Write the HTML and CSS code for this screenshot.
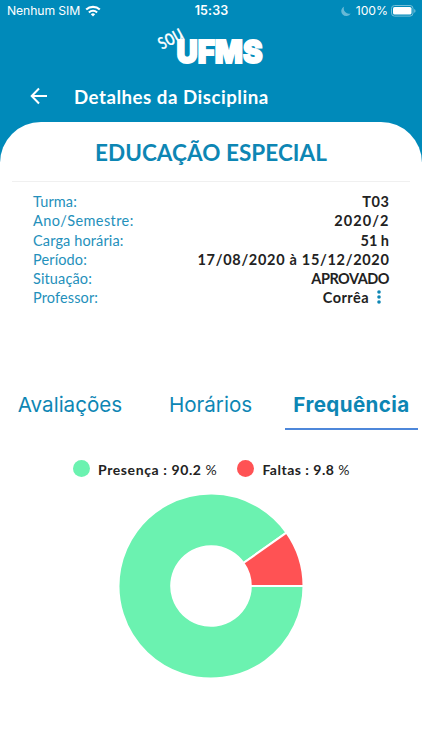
FILE: index.html
```html
<!DOCTYPE html>
<html lang="pt-BR">
<head>
<meta charset="utf-8">
<title>Detalhes da Disciplina</title>
<link rel="stylesheet" href="styles.css">
</head>
<body>
<header class="header">
  <div class="status">
    <div class="status-left"><span class="carrier">Nenhum SIM</span>
      <svg width="16" height="12" viewBox="0 0 16 12"><g fill="none" stroke="#fff" stroke-width="2.1"><path d="M1.2 4.6a9.8 9.8 0 0 1 13.6 0"/><path d="M3.9 7.4a5.9 5.9 0 0 1 8.2 0"/></g><path d="M5.8 9.2a3.2 3.2 0 0 1 4.4 0L8 11.5z" fill="#fff"/></svg>
    </div>
    <span class="time">15:33</span>
    <div class="status-right">
      <svg width="10" height="11" viewBox="0 0 10 11"><path d="M3.2.5A5 5 0 1 0 9.7 7.4 5.2 5.2 0 0 1 3.2.5z" fill="#66b9d6"/></svg>
      <span class="percent">100%</span>
      <svg width="25" height="12" viewBox="0 0 25 12"><rect x=".5" y=".5" width="21.5" height="10.6" rx="3" fill="none" stroke="#73bfd9"/><rect x="2" y="2" width="18.5" height="7.6" rx="1.6" fill="#fff"/><path d="M23.2 4v3.8q1.3-.5 1.3-1.9T23.2 4z" fill="#73bfd9"/></svg>
    </div>
  </div>
  <svg class="logo" width="124" height="46" viewBox="0 0 124 46">
    <text class="logo-sou" transform="translate(11.5 27.5) rotate(-26) skewX(8) scale(1 1.4)" textLength="26" lengthAdjust="spacingAndGlyphs">sou</text>
    <text class="logo-name" x="25.5" y="41.3" textLength="86" lengthAdjust="spacingAndGlyphs">UFMS</text>
  </svg>
  <div class="nav">
    <svg width="18" height="18" viewBox="0 0 18 18"><path d="M9 1.5 1.7 9 9 16.5M1.9 9H17" fill="none" stroke="#fff" stroke-width="2"/></svg>
    <h1 class="nav-title">Detalhes da Disciplina</h1>
  </div>
</header>
<main class="card">
  <h2 class="course">EDUCAÇÃO ESPECIAL</h2>
  <dl class="details">
    <div class="row"><dt>Turma:</dt><dd class="class-id">T03</dd></div>
    <div class="row"><dt class="term-label">Ano/Semestre:</dt><dd class="term">2020/2</dd></div>
    <div class="row"><dt>Carga horária:</dt><dd>51 h</dd></div>
    <div class="row"><dt>Período:</dt><dd class="period">17/08/2020 à 15/12/2020</dd></div>
    <div class="row"><dt>Situação:</dt><dd class="result">APROVADO</dd></div>
    <div class="row"><dt>Professor:</dt><dd class="teacher">Corrêa<svg class="more" width="6" height="14" viewBox="0 0 6 14"><g fill="#0d86b4"><circle cx="3" cy="2" r="1.8"/><circle cx="3" cy="7" r="1.8"/><circle cx="3" cy="12" r="1.8"/></g></svg></dd></div>
  </dl>
  <nav class="tabs">
    <a class="tab">Avaliações</a>
    <a class="tab">Horários</a>
    <a class="tab active">Frequência</a>
  </nav>
  <div class="legend">
    <span class="dot green"></span><span class="leg presence">Presença : 90.2 <span class="unit">%</span></span>
    <span class="dot red"></span><span class="leg absence">Faltas : 9.8 <span class="unit">%</span></span>
  </div>
  <svg class="chart" width="188" height="188" viewBox="-94 -94 188 188">
    <g stroke="#fff" stroke-width="2">
      <path fill="#6bf2b0" d="M92.5 0A92.5 92.5 0 1 1 75.5-53.4L32.5-23A39.8 39.8 0 1 0 39.8 0z"/>
      <path fill="#ff5254" d="M75.5-53.4A92.5 92.5 0 0 1 92.5 0H39.8A39.8 39.8 0 0 0 32.5-23z"/>
    </g>
  </svg>
</main>
</body>
</html>
```

FILE: styles.css
```css
* { box-sizing: border-box; }
body { margin: 0; width: 422px; height: 750px; overflow: hidden; background: #fff; font-family: Lato, sans-serif; }
svg { display: block; flex: none; }
.header { background: #008aba; height: 162px; color: #fff; }
.status { display: grid; grid-template-columns: 1fr auto 1fr; align-items: center; height: 22px; padding: 0 6px 0 7px; font: 12px/22px Inter, sans-serif; }
.status-left, .status-right { display: flex; align-items: center; }
.status-left { gap: 5px; }
.status-right { justify-content: flex-end; }
.carrier { font-size: 12.2px; letter-spacing: -.1px; }
.time { font-weight: 600; font-size: 12.5px; letter-spacing: .1px; }
.percent { margin: 0 3px 0 5px; font-size: 12.2px; }
.logo { margin: 0 0 0 151px; overflow: visible; }
.logo-name { font: 900 31.5px Inter, sans-serif; fill: #fff; stroke: #fff; stroke-width: 1.8px; }
.logo-sou { font: italic 400 17px Lato, sans-serif; fill: #fff; stroke: #fff; stroke-width: .2px; }
.nav { display: flex; align-items: center; height: 32px; margin: 12px 0 0 30px; }
.nav-title { margin: 1px 0 0 26px; font: 700 18.7px/28px Lato, sans-serif; letter-spacing: .5px; white-space: nowrap; }
.card { background: #fff; border-radius: 41px 41px 0 0; margin-top: -40px; height: 628px; }
.course { margin: 0 12px; height: 60px; border-bottom: 1px solid #f0f0f0; text-align: center; color: #0d86b4; font: 700 22.5px/61px Lato, sans-serif; letter-spacing: .05px; }
.details { margin: 10px 33px 0; }
.row { display: flex; justify-content: space-between; height: 19.3px; font-size: 14.5px; line-height: 19.3px; white-space: nowrap; }
dt { color: #2490bb; letter-spacing: .13px; }
.term-label { letter-spacing: .4px; }
dd { margin: 0; color: #222; font-weight: 700; display: flex; }
.class-id { letter-spacing: .6px; margin-right: -.6px; }
.term { letter-spacing: 1.1px; margin-right: -.6px; }
.period { letter-spacing: .7px; margin-right: -.6px; }
.result { letter-spacing: -.5px; }
.teacher { letter-spacing: .45px; }
.more { margin: 2px 7px 0 7px; }
.tabs { display: grid; grid-template-columns: 140px 141px 141px; height: 50px; margin-top: 73px; font: 20.6px/48px Inter, sans-serif; color: #0d86b4; text-align: center; }
.tab { white-space: nowrap; }
.active { font-weight: 700; letter-spacing: .4px; border-bottom: 2px solid #4d87da; width: 133px; margin-left: 4px; height: 49px; }
.legend { display: flex; align-items: center; height: 20px; margin: 29px 0 0 73px; font-size: 14px; font-weight: 700; color: #222; white-space: nowrap; }
.dot { width: 17px; height: 17px; border-radius: 50%; margin-top: -2px; }
.green { background: #6bf2b0; }
.red { background: #ff5254; margin-left: 20px; }
.leg { margin-left: 8px; }
.presence { letter-spacing: .6px; }
.absence { letter-spacing: .5px; }
.unit { font-weight: 400; }
.chart { margin: 12px 0 0 117px; }
```
